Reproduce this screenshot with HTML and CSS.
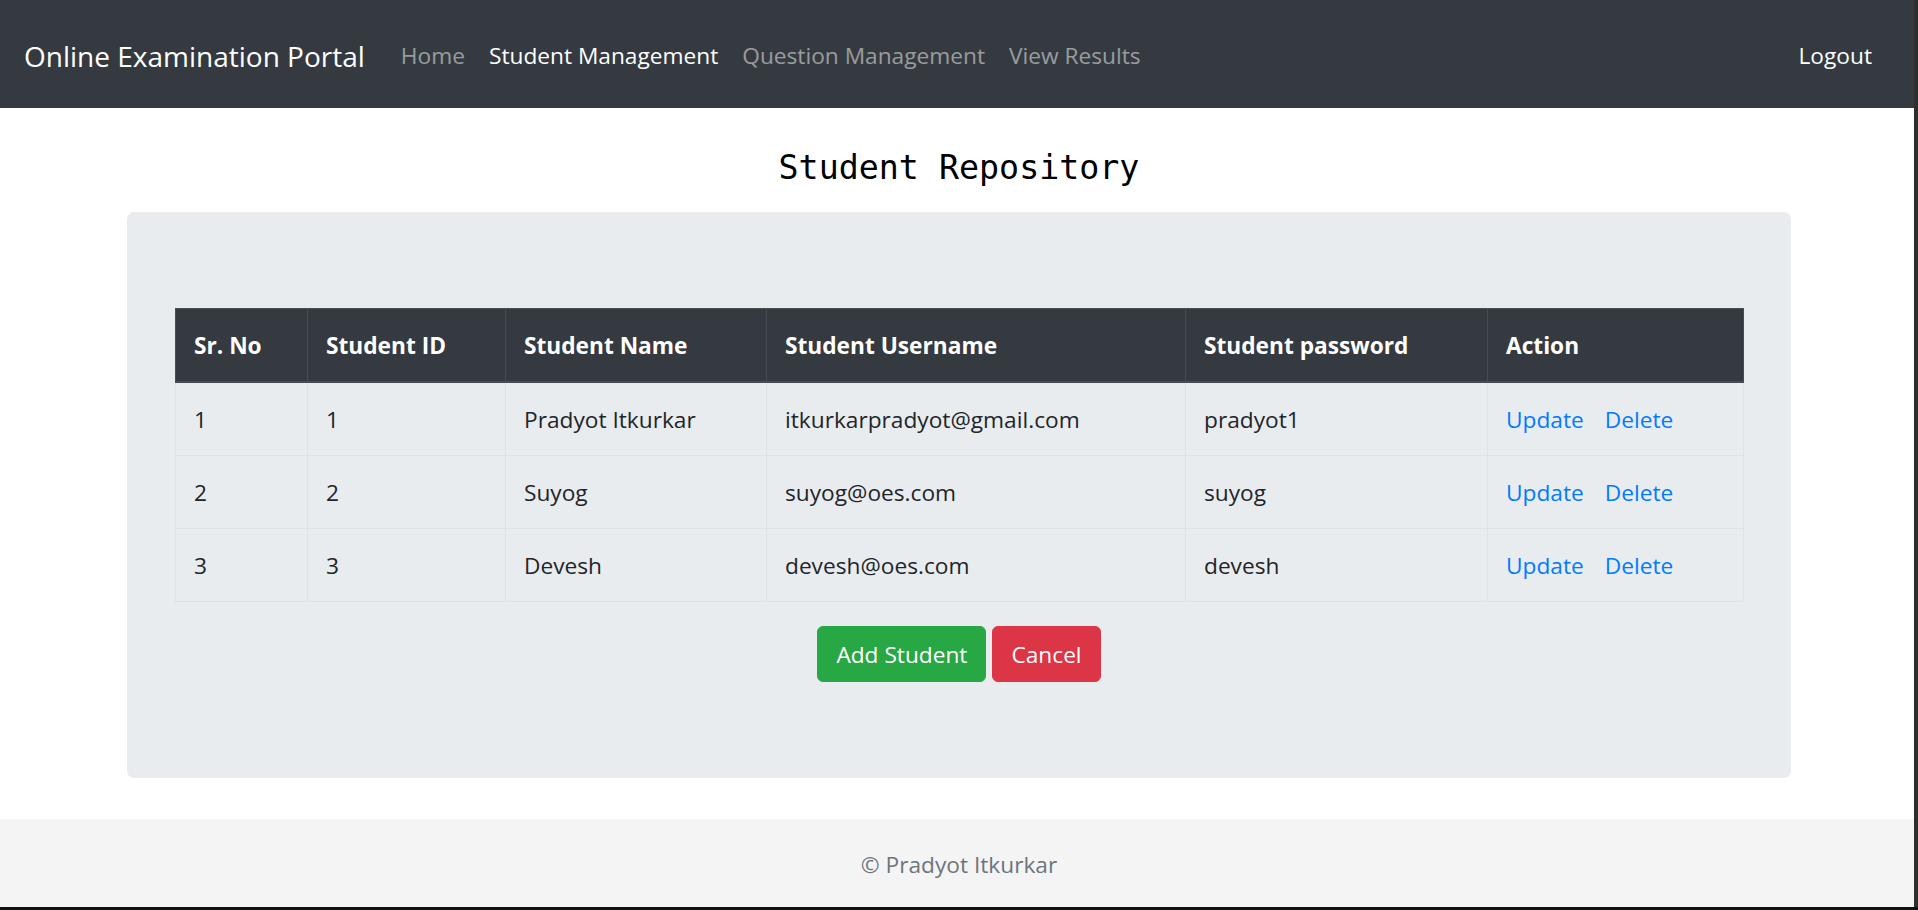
FILE: index.html
```html
<!DOCTYPE html>
<html lang="en">
<head>
<meta charset="utf-8">
<title>Student Repository</title>
<link rel="stylesheet" href="styles.css">
</head>
<body>
<nav class="navbar">
  <a class="brand" href="#">Online Examination Portal</a>
  <ul class="nav">
    <li><a class="nav-link" href="#">Home</a></li>
    <li><a class="nav-link active" href="#">Student Management</a></li>
    <li><a class="nav-link" href="#">Question Management</a></li>
    <li><a class="nav-link" href="#">View Results</a></li>
  </ul>
  <a class="nav-link logout" href="#">Logout</a>
</nav>

<main class="container">
  <h4 class="title">Student Repository</h4>
  <section class="jumbotron">
    <table class="table">
      <thead>
        <tr>
          <th class="c1">Sr. No</th>
          <th class="c2">Student ID</th>
          <th class="c3">Student Name</th>
          <th class="c4">Student Username</th>
          <th class="c5">Student password</th>
          <th class="c6">Action</th>
        </tr>
      </thead>
      <tbody>
        <tr>
          <td>1</td><td>1</td><td>Pradyot Itkurkar</td><td>itkurkarpradyot@gmail.com</td><td>pradyot1</td>
          <td class="act"><a href="#">Update</a><a href="#">Delete</a></td>
        </tr>
        <tr>
          <td>2</td><td>2</td><td>Suyog</td><td>suyog@oes.com</td><td>suyog</td>
          <td class="act"><a href="#">Update</a><a href="#">Delete</a></td>
        </tr>
        <tr>
          <td>3</td><td>3</td><td>Devesh</td><td>devesh@oes.com</td><td>devesh</td>
          <td class="act"><a href="#">Update</a><a href="#">Delete</a></td>
        </tr>
      </tbody>
    </table>
    <div class="actions">
      <button class="btn btn-success" type="button">Add Student</button>
      <button class="btn btn-danger" type="button">Cancel</button>
    </div>
  </section>
</main>

<footer class="footer">© Pradyot Itkurkar</footer>

<div class="edge-right"></div>
<div class="edge-bottom"></div>
</body>
</html>
```

FILE: styles.css
```css
* {
  box-sizing: border-box;
}

html, body {
  margin: 0;
  padding: 0;
}

body {
  font-family: "Open Sans", "Noto Sans", sans-serif;
  font-size: 22.7px;
  line-height: 36px;
  color: #212529;
  background: #fff;
}

a {
  text-decoration: none;
}

/* Navbar */
.navbar {
  height: 108px;
  background: #343a40;
  display: flex;
  align-items: center;
  padding: 4px 34px 0 24px;
}

.brand {
  color: #fff;
  font-size: 28px;
  line-height: 45px;
  margin-right: 24px;
  white-space: nowrap;
}

.nav {
  display: flex;
  list-style: none;
  margin: 0;
  padding: 0;
  flex: 1;
}

.nav-link {
  display: block;
  padding: 0 12px;
  color: rgba(255, 255, 255, 0.5);
  white-space: nowrap;
}

.nav-link.active,
.nav-link.logout {
  color: #fff;
}

/* Main */
.container {
  width: 1664px;
  margin: 0 auto;
}

.title {
  font-family: "DejaVu Sans Mono", "Liberation Mono", monospace;
  font-weight: 400;
  font-size: 33.3px;
  line-height: 40px;
  color: #000;
  text-align: center;
  margin: 40px 0 24px;
}

.jumbotron {
  background: #e9ecef;
  border-radius: 7px;
  padding: 96px 48px;
}

/* Table */
.table {
  width: 1568px;
  table-layout: fixed;
  border-collapse: collapse;
  margin: 0 0 24px;
}

.table th,
.table td {
  padding: 19px 18px 17px;
  text-align: left;
  vertical-align: top;
  border: 1px solid #dee2e6;
}

.table th {
  background: #343a40;
  color: #fff;
  font-weight: 700;
  border-color: #454d55;
  border-bottom-width: 2px;
}

.c1 { width: 132px; }
.c2 { width: 198px; }
.c3 { width: 261px; }
.c4 { width: 419px; }
.c5 { width: 302px; }
.c6 { width: 256px; }

.act a {
  color: #007bff;
}

.act a + a {
  margin-left: 21px;
}

/* Buttons */
.actions {
  display: flex;
  justify-content: center;
  gap: 6px;
}

.btn {
  font-family: inherit;
  font-size: 22.7px;
  line-height: 36px;
  height: 56px;
  padding: 2px 18px 0;
  border: 1px solid transparent;
  border-radius: 6px;
  color: #fff;
  cursor: pointer;
}

.btn-success {
  background: #28a745;
  border-color: #28a745;
}

.btn-danger {
  background: #dc3545;
  border-color: #dc3545;
}

/* Footer */
.footer {
  margin-top: 41px;
  height: 88px;
  padding-top: 4px;
  background: #f4f4f4;
  color: #6c757d;
  display: flex;
  align-items: center;
  justify-content: center;
}

/* Window frame edges */
.edge-right {
  position: fixed;
  top: 0;
  right: 0;
  bottom: 0;
  width: 4px;
  background: #2e2e2e;
}

.edge-bottom {
  position: fixed;
  left: 0;
  right: 0;
  bottom: 0;
  height: 3px;
  background: #111;
}
```
